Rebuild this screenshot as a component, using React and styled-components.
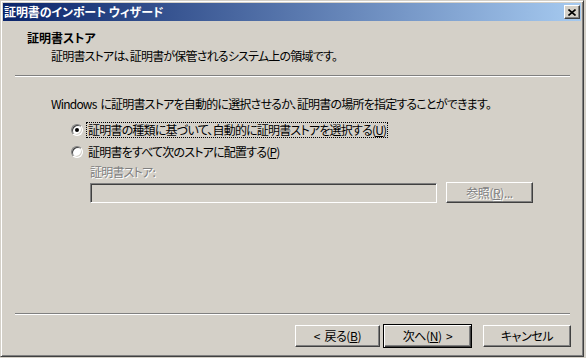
import styled, { createGlobalStyle } from "styled-components";

const GlobalStyle = createGlobalStyle`
  html, body {
    margin: 0;
    padding: 0;
    background: #d4d0c8;
  }
  body {
    font-family: "Noto Sans CJK JP", "Liberation Sans", sans-serif;
    font-size: 12px;
    font-feature-settings: "palt";
    letter-spacing: -0.8px;
    word-spacing: 2px;
    color: #000;
  }
`;

const Window = styled.div`
  width: 584px;
  height: 357px;
  box-sizing: border-box;
  display: flex;
  flex-direction: column;
  padding: 2px;
  background: #d4d0c8;
  border: 1px solid;
  border-color: #d4d0c8 #404040 #404040 #d4d0c8;
  box-shadow: inset 1px 1px #fff, inset -1px -1px #808080;
`;

const TitleBar = styled.div`
  height: 18px;
  flex-shrink: 0;
  display: flex;
  align-items: center;
  justify-content: space-between;
  padding: 0 1px;
  background: linear-gradient(to right, #0a246a, #a6caf0);
`;

const TitleText = styled.span`
  color: #fff;
  font-weight: bold;
  letter-spacing: -0.1px;
  word-spacing: 0;
  line-height: 18px;
  white-space: pre;
`;

const CloseButton = styled.div`
  width: 16px;
  height: 14px;
  box-sizing: border-box;
  display: flex;
  align-items: center;
  justify-content: center;
  background: #d4d0c8;
  border: 1px solid;
  border-color: #fff #404040 #404040 #fff;
  box-shadow: inset -1px -1px #808080;
`;

const Header = styled.div`
  height: 54px;
  box-sizing: border-box;
  flex-shrink: 0;
  padding-top: 10px;
`;

const HeaderTitle = styled.div`
  font-weight: bold;
  letter-spacing: 0;
  line-height: 14px;
  padding-left: 24px;
`;

const HeaderSub = styled.div`
  line-height: 14px;
  margin-top: 4px;
  padding-left: 48px;
`;

const Separator = styled.div`
  height: 1px;
  flex-shrink: 0;
  margin: ${(p) => (p.$bottom ? "auto" : "0")} 11px 0 12px;
  background: #808080;
  border-bottom: 1px solid #fff;
`;

const Body = styled.div`
  padding: 20px 0 0 48px;
`;

const Line = styled.div`
  line-height: 14px;
  white-space: nowrap;
`;

const RadioGroup = styled.div`
  margin-top: 8px;
  padding-left: 20px;
`;

const RadioRow = styled.div`
  height: 22px;
  display: flex;
  align-items: center;
  gap: 4px;
  white-space: nowrap;
`;

const RadioDot = styled.span`
  position: relative;
  width: 12px;
  height: 12px;
  box-sizing: border-box;
  border-radius: 50%;
  border: 1px solid;
  border-color: #808080 #fff #fff #808080;
  box-shadow: inset 1px 1px #404040, inset -1px -1px #d4d0c8;
  background: #fff;
  flex-shrink: 0;

  &::after {
    content: "";
    display: ${(p) => (p.$checked ? "block" : "none")};
    position: absolute;
    left: 3px;
    top: 3px;
    width: 4px;
    height: 4px;
    border-radius: 50%;
    background: #000;
  }
`;

const RadioLabel = styled.span`
  line-height: 14px;
  padding: 0 1px;
  outline: ${(p) => (p.$focused ? "1px dotted #000" : "none")};
`;

const StoreSection = styled.div`
  margin-top: 2px;
  padding-left: 39px;
`;

const DisabledLabel = styled.div`
  line-height: 14px;
  color: #808080;
  text-shadow: 1px 1px #fff;
`;

const FieldRow = styled.div`
  display: flex;
  align-items: flex-start;
  gap: 9px;
  margin-top: 3px;
`;

const TextBox = styled.div`
  width: 347px;
  height: 20px;
  margin-top: 1px;
  box-sizing: border-box;
  background: #d4d0c8;
  border: 1px solid;
  border-color: #808080 #fff #fff #808080;
  box-shadow: inset 1px 1px #404040, inset -1px -1px #d4d0c8;
`;

const Button = styled.div`
  width: ${(p) => p.$w}px;
  height: ${(p) => (p.$default ? 24 : p.$h || 22)}px;
  margin-top: ${(p) => (p.$default ? -1 : 0)}px;
  box-sizing: border-box;
  display: flex;
  align-items: center;
  justify-content: center;
  line-height: 14px;
  letter-spacing: -0.4px;
  white-space: pre;
  background: #d4d0c8;
  color: ${(p) => (p.$disabled ? "#808080" : "#000")};
  text-shadow: ${(p) => (p.$disabled ? "1px 1px #fff" : "none")};
  border: 1px solid;
  border-color: ${(p) =>
    p.$default ? "#000" : "#fff #404040 #404040 #fff"};
  box-shadow: ${(p) =>
    p.$default
      ? "inset 1px 1px #fff, inset -1px -1px #404040, inset -2px -2px #808080"
      : "inset -1px -1px #808080"};
`;

const Footer = styled.div`
  height: 39px;
  box-sizing: border-box;
  flex-shrink: 0;
  display: flex;
  justify-content: flex-end;
  align-items: flex-start;
  padding: 10px 10px 0 0;
`;

const Gap = styled.span`
  width: ${(p) => p.$w}px;
  flex-shrink: 0;
`;

const U = styled.span`
  text-decoration: underline;
`;

const CloseIcon = () => (
  <svg width="8" height="7" viewBox="0 0 8 7">
    <path d="M0.5 0.5 L7.5 6.5 M7.5 0.5 L0.5 6.5" stroke="#000" strokeWidth="1.6" />
  </svg>
);

export default function App() {
  return (
    <>
      <GlobalStyle />
      <Window>
        <TitleBar>
          <TitleText>証明書のインポート ウィザード</TitleText>
          <CloseButton>
            <CloseIcon />
          </CloseButton>
        </TitleBar>
        <Header>
          <HeaderTitle>証明書ストア</HeaderTitle>
          <HeaderSub>証明書ストアは、証明書が保管されるシステム上の領域です。</HeaderSub>
        </Header>
        <Separator />
        <Body>
          <Line>
            Windows に証明書ストアを自動的に選択させるか、証明書の場所を指定することができます。
          </Line>
          <RadioGroup>
            <RadioRow>
              <RadioDot $checked />
              <RadioLabel $focused>
                証明書の種類に基づいて、自動的に証明書ストアを選択する(<U>U</U>)
              </RadioLabel>
            </RadioRow>
            <RadioRow>
              <RadioDot />
              <RadioLabel>
                証明書をすべて次のストアに配置する(<U>P</U>)
              </RadioLabel>
            </RadioRow>
          </RadioGroup>
          <StoreSection>
            <DisabledLabel>証明書ストア:</DisabledLabel>
            <FieldRow>
              <TextBox />
              <Button $w={87} $h={21} $disabled>
                参照(<U>R</U>)...
              </Button>
            </FieldRow>
          </StoreSection>
        </Body>
        <Separator $bottom />
        <Footer>
          <Button $w={85}>
            {"< 戻る("}<U>B</U>{")"}
          </Button>
          <Gap $w={3} />
          <Button $w={89} $default>
            {"次へ("}<U>N</U>{") >"}
          </Button>
          <Gap $w={11} />
          <Button $w={88}>キャンセル</Button>
        </Footer>
      </Window>
    </>
  );
}
